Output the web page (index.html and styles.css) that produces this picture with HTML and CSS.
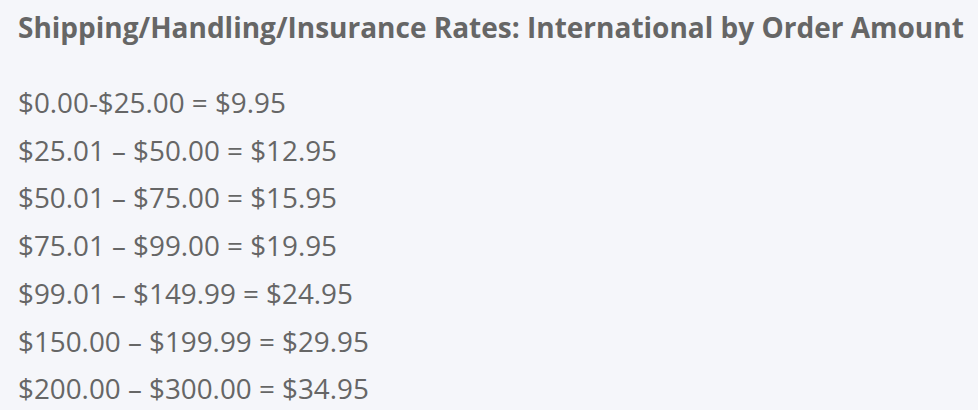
FILE: index.html
```html
<!DOCTYPE html>
<html>
<head>
<meta charset="utf-8">
<link rel="stylesheet" href="styles.css">
</head>
<body>
<div class="rates">
  <h2 class="rates-title">Shipping/Handling/Insurance Rates: International by Order Amount</h2>
  <ul class="rates-list">
    <li>$0.00-$25.00 = $9.95</li>
    <li>$25.01 – $50.00 = $12.95</li>
    <li>$50.01 – $75.00 = $15.95</li>
    <li>$75.01 – $99.00 = $19.95</li>
    <li>$99.01 – $149.99 = $24.95</li>
    <li>$150.00 – $199.99 = $29.95</li>
    <li>$200.00 – $300.00 = $34.95</li>
  </ul>
</div>
</body>
</html>
```
FILE: styles.css
```css
html, body {
  margin: 0;
  padding: 0;
  background: #f5f6fa;
  overflow: hidden;
}
.rates {
  padding: 8px 0 0 18px;
  font-family: "Open Sans", sans-serif;
  color: #666;
}
.rates-title {
  margin: 0;
  font-size: 28px;
  font-weight: 700;
  line-height: 38px;
  white-space: nowrap;
}
.rates-list {
  list-style: none;
  margin: 33px 0 0;
  padding: 0;
  font-size: 27.8px;
  line-height: 47.7px;
}
```
